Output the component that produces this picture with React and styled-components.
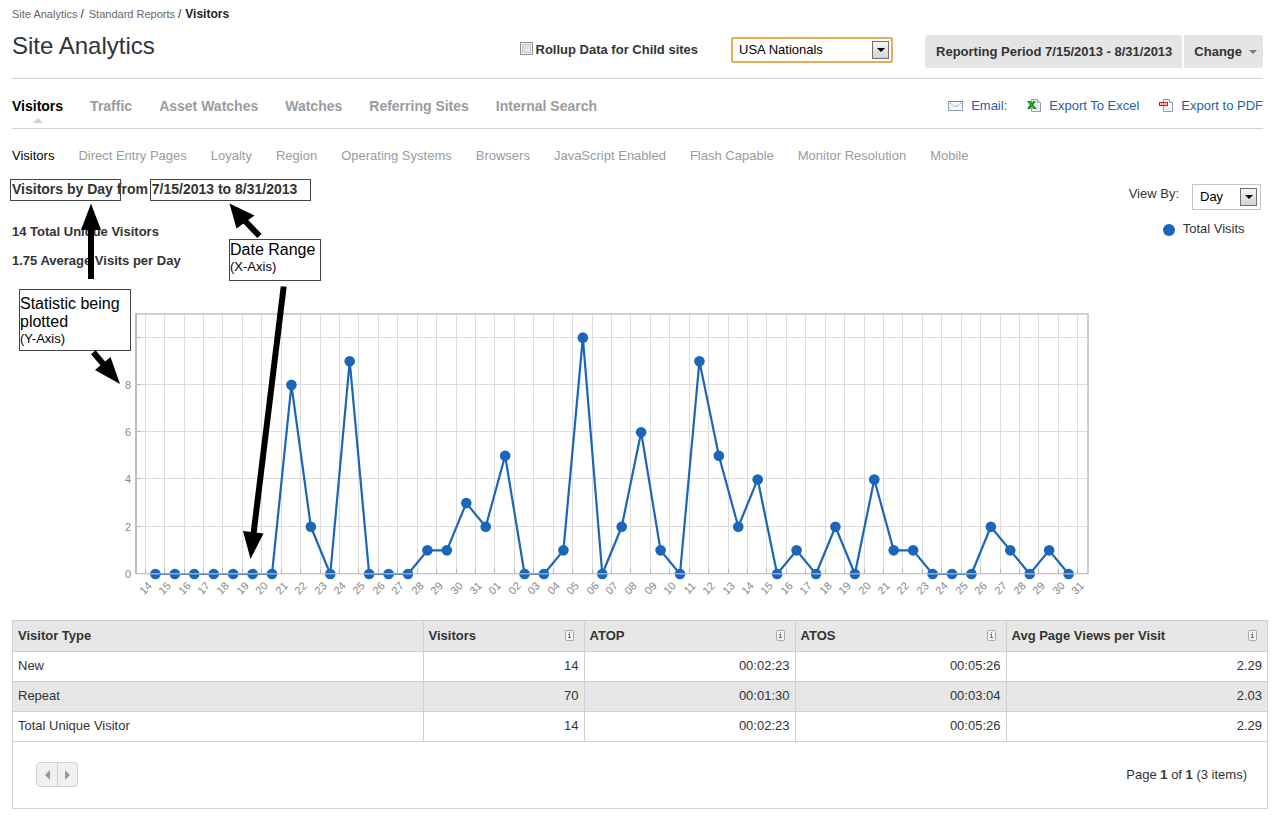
import React from 'react';
import styled, { createGlobalStyle } from 'styled-components';

const GlobalStyle = createGlobalStyle`
  * { box-sizing: border-box; }
  body {
    margin: 0;
    background: #fff;
    color: #333;
    font: 13px/16px "Liberation Sans", Arial, sans-serif;
  }
  button, select, input { font: inherit; color: inherit; margin: 0; }
  h1, h2, p, ul { margin: 0; padding: 0; }
  a { text-decoration: none; color: inherit; }
`;

const Page = styled.div`
  position: relative;
  padding: 6px 11px 11px 12px;
`;

const Breadcrumb = styled.nav`
  display: flex;
  gap: 3px;
  font-size: 12px;
  a { font-size: 11px; color: #666; }
  a + span + a { margin-left: 2px; }
  strong { margin-left: 1px; color: #222; }
`;

const Header = styled.header`
  display: flex;
  justify-content: space-between;
  margin-right: 5px;
  height: 57px;
  border-bottom: 1px solid #d1d1d1;
`;

const Title = styled.h1`
  padding-top: 10px;
  font-size: 24px;
  font-weight: 400;
  line-height: 28px;
  color: #333;
`;

const Controls = styled.div`
  display: flex;
  align-items: flex-start;
  gap: 32px;
  margin-top: 13px;
`;

const Filters = styled.div`
  display: flex;
  align-items: center;
  gap: 33px;
  height: 30px;
`;

const CheckLabel = styled.label`
  display: flex;
  align-items: flex-start;
  gap: 3px;
  font-weight: 700;
`;

const Checkbox = styled.input`
  appearance: none;
  width: 13px;
  height: 13px;
  border: 1px solid #8e8f8f;
  background: linear-gradient(135deg, #cbcfd5, #f6f6f6);
  box-shadow: inset 0 0 0 1px #f4f4f4, inset 0 0 0 2px #c4c8cc;
  &:checked { background: #1a66b8; }
`;

const SelectBox = styled.span`
  position: relative;
  display: block;
  width: ${p => p.$width}px;
`;

const Select = styled.select`
  appearance: none;
  display: block;
  width: 100%;
  height: 26px;
  padding: 0 24px 0 ${p => (p.$focused ? 6 : 7)}px;
  border: ${p => (p.$focused ? '2px solid #e5b055' : '1px solid #c4c4c4')};
  border-radius: ${p => (p.$focused ? 2 : 0)}px;
  background: #fff;
  color: #000;
  outline: 0;
`;

const SelectArrow = styled.span`
  position: absolute;
  top: 4px;
  right: 4px;
  display: flex;
  align-items: center;
  justify-content: center;
  width: 17px;
  height: 18px;
  border: 1px solid #707070;
  background: linear-gradient(#f5f5f5, #d3d3d3);
  pointer-events: none;
`;

const Triangle = styled.i`
  width: 0;
  height: 0;
  border: solid transparent;
  border-width: 4px 4px 0;
  border-top-color: ${p => p.$color};
`;

const Period = styled.div`
  display: flex;
  gap: 2px;
`;

const PeriodButton = styled.button`
  display: flex;
  align-items: center;
  gap: 7px;
  height: 33px;
  padding: 0 ${p => (p.$last ? 6 : 10)}px 0 ${p => (p.$last ? 10 : 11)}px;
  border: 0;
  border-radius: ${p => (p.$last ? '0 3px 3px 0' : '3px 0 0 3px')};
  background: #e5e5e5;
  font-weight: 700;
  white-space: nowrap;
`;

const TabBar = styled.div`
  display: flex;
  justify-content: space-between;
  align-items: center;
  height: 50px;
  margin-right: 5px;
  padding: 6px 0 2px;
  border-bottom: 1px solid #d1d1d1;
`;

const TabList = styled.nav`
  display: flex;
  gap: 27px;
`;

const Tab = styled.a`
  position: relative;
  font-size: 14px;
  font-weight: 700;
  color: ${p => (p.$active ? '#000' : '#999c9f')};
  &::after {
    content: "";
    display: ${p => (p.$active ? 'block' : 'none')};
    position: absolute;
    top: 20px;
    left: calc(50% - 5px);
    border: solid transparent;
    border-width: 0 5px 5px;
    border-bottom-color: #d1d1d1;
  }
`;

const Actions = styled.div`
  display: flex;
  gap: 20px;
`;

const Action = styled.a`
  display: flex;
  align-items: center;
  gap: 8px;
  color: #1f5fae;
`;

const SubNav = styled.nav`
  display: flex;
  flex-wrap: wrap;
  gap: 24px;
  padding: 19px 0 0;
`;

const SubLink = styled.a`
  color: ${p => (p.$active ? '#000' : '#999c9f')};
`;

const Summary = styled.section`
  display: flex;
  justify-content: space-between;
  margin-right: 7px;
  height: 144px;
  padding-top: 16px;
`;

const Heading = styled.h2`
  font-size: 14px;
  line-height: 18px;
`;

const Stat = styled.p`
  margin-top: ${p => (p.$first ? 26 : 13)}px;
  font-weight: 700;
`;

const ViewOptions = styled.div`
  padding-top: 4px;
`;

const ViewBy = styled.div`
  display: flex;
  gap: 13px;
  label { padding-top: 2px; }
`;

const Legend = styled.div`
  display: flex;
  align-items: center;
  gap: 8px;
  padding: 11px 0 0 34px;
`;

const LegendDot = styled.i`
  width: 12px;
  height: 12px;
  margin-top: 2px;
  border-radius: 50%;
  background: #1a66b8;
`;

const ChartArea = styled.section`
  padding: 0 0 12px 108px;
  svg { display: block; width: 100%; max-width: 976px; height: auto; }
`;

const Grid = styled.section`
  border: 1px solid #d1d1d1;
`;

const Table = styled.table`
  width: 100%;
  border-collapse: collapse;
  table-layout: fixed;
`;

const Row = styled.tr`
  height: 30px;
  border-bottom: 1px solid #d1d1d1;
  background: ${p => (p.$shaded ? '#e7e7e7' : '#fff')};
`;

const Cell = styled.td`
  padding: 0 5px;
  border-left: ${p => (p.$first ? 0 : 1)}px solid #d1d1d1;
  text-align: ${p => (p.$first ? 'left' : 'right')};
`;

const HeadCell = styled.th`
  padding: 0 10px 0 5px;
  border-left: ${p => (p.$first ? 0 : 1)}px solid #d1d1d1;
  text-align: left;
`;

const HeadContent = styled.span`
  display: flex;
  align-items: center;
  justify-content: space-between;
`;

const Footer = styled.div`
  display: flex;
  align-items: center;
  justify-content: space-between;
  height: 66px;
  padding: 0 20px 0 23px;
`;

const Pager = styled.div`
  display: flex;
  border: 1px solid #d1d1d1;
  border-radius: 4px;
  background: #f0f0f0;
`;

const PagerButton = styled.button`
  display: flex;
  align-items: center;
  justify-content: center;
  width: 20px;
  height: 23px;
  padding: 0;
  border: 0;
  background: none;
  & + & { border-left: 1px solid #d1d1d1; }
`;

const Note = styled.div`
  position: absolute;
  left: ${p => p.$x}px;
  top: ${p => p.$y}px;
  width: ${p => p.$w}px;
  height: ${p => p.$h}px;
  border: 1px solid #444;
  background: ${p => (p.children ? '#fff' : 'transparent')};
  color: #000;
  font-size: 16px;
  line-height: 18px;
  padding-top: ${p => p.$pad || 0}px;
  small { display: block; font-size: 13px; line-height: 16px; }
`;

const Arrows = styled.svg`
  position: absolute;
  left: 0;
  top: 0;
  pointer-events: none;
`;

const tabs = ['Visitors', 'Traffic', 'Asset Watches', 'Watches', 'Referring Sites', 'Internal Search'];
const subTabs = ['Visitors', 'Direct Entry Pages', 'Loyalty', 'Region', 'Operating Systems', 'Browsers',
  'JavaScript Enabled', 'Flash Capable', 'Monitor Resolution', 'Mobile'];
const visits = [0, 0, 0, 0, 0, 0, 0, 8, 2, 0, 9, 0, 0, 0, 1, 1, 3, 2, 5, 0, 0, 1, 10, 0, 2, 6, 1, 0, 9, 5, 2, 4,
  0, 1, 0, 2, 0, 4, 1, 1, 0, 0, 0, 2, 1, 0, 1, 0];
const days = [
  ...Array.from({ length: 18 }, (_, i) => String(i + 14)),
  ...Array.from({ length: 31 }, (_, i) => String(i + 1).padStart(2, '0')),
];
const columns = ['Visitor Type', 'Visitors', 'ATOP', 'ATOS', 'Avg Page Views per Visit'];
const rows = [
  ['New', '14', '00:02:23', '00:05:26', '2.29'],
  ['Repeat', '70', '00:01:30', '00:03:04', '2.03'],
  ['Total Unique Visitor', '14', '00:02:23', '00:05:26', '2.29'],
];

function MailIcon() {
  return (
    <svg width="15" height="10" viewBox="0 0 15 10" aria-hidden="true">
      <rect x=".5" y=".5" width="14" height="9" fill="#f3f7fc" stroke="#8d9db8" />
      <path d="M0 .5h15" stroke="#6f83a5" />
      <path d="M2 2l4 3.3h3L13 2" fill="none" stroke="#8d9db8" strokeDasharray="2 1" />
    </svg>
  );
}

function FileShape() {
  return (
    <>
      <path d="M4.500 .5h6l3 3v9h-9z" fill="#f5f8fc" stroke="#8d9db8" />
      <path d="M10.500 .5v3h3" fill="#fff" stroke="#8d9db8" />
    </>
  );
}

function ExcelIcon() {
  return (
    <svg width="14" height="13" viewBox="0 0 14 13" aria-hidden="true">
      <FileShape />
      <path d="M8.500 6h3M8.500 8.500h3M8.500 10.500h3" stroke="#c3cfdf" />
      <path d="M0 2h3.500l1.500 2 1.500-2h2.500L6.500 5.500 9.500 10H6L4.500 7.500 3 10H0l2.800-4z" fill="#0b8f1a" />
      <path d="M2 3l5 6" stroke="#8fd68f" strokeWidth=".6" />
    </svg>
  );
}

function PdfIcon() {
  return (
    <svg width="14" height="13" viewBox="0 0 14 13" aria-hidden="true">
      <FileShape />
      <path d="M6.500 9h4M6.500 10.500h4" stroke="#d5dde9" />
      <rect x=".5" y="3.500" width="8" height="3" fill="#ffdcd6" stroke="#d3170f" />
      <path d="M2 5h5" stroke="#e8574f" strokeDasharray="1.500 .5" />
    </svg>
  );
}

function InfoIcon() {
  return (
    <svg width="9" height="11" viewBox="0 0 9 11" aria-hidden="true">
      <rect x=".5" y=".5" width="8" height="10" rx="1" fill="#f4f4f4" stroke="#a9a9a9" />
      <path d="M4 2h1v1H4zM3 4h2v3h1v1H3V7h1V5H3z" fill="#5b7696" />
    </svg>
  );
}

function DropDown({ id, width, focused, options, label }) {
  return (
    <SelectBox $width={width}>
      <Select id={id} $focused={focused} aria-label={label}>
        {options.map(o => <option key={o}>{o}</option>)}
      </Select>
      <SelectArrow><Triangle $color="#000" /></SelectArrow>
    </SelectBox>
  );
}

function VisitsChart() {
  const left = 16;
  const right = 968;
  const top = 6;
  const bottom = 266;
  const step = (right - left) / 49;
  const unit = (bottom - top) / 11;
  const tickX = i => Math.round(left + step * (i + 0.5)) - 0.5;
  const pointX = i => left + step * (i + 1);
  const y = v => bottom - v * unit;
  const lineY = v => Math.round(y(v)) - 0.5;
  return (
    <svg viewBox="0 0 976 300" role="img" aria-label="Total visits by day">
      <g stroke="#dcdcdc">
        {days.map((_, i) => <path key={i} d={`M${tickX(i)} ${top}V${bottom}`} />)}
        {[2, 4, 6, 8, 10].map(v => <path key={v} d={`M${left} ${lineY(v)}H${right}`} />)}
      </g>
      <path d={`M${left} ${top}H${right}V${bottom}`} fill="none" stroke="#d0d0d0" strokeWidth="2" />
      <path d={`M${left} ${top - 1}V${bottom}`} stroke="#bcbcbc" strokeWidth="2" />
      <g stroke="#b5b5b5">
        {days.map((_, i) => <path key={i} d={`M${tickX(i)} ${bottom - 5}v5`} />)}
        {[2, 4, 6, 8, 10].map(v => <path key={v} d={`M${left} ${lineY(v)}h5`} />)}
      </g>
      <polyline
        points={visits.map((v, i) => `${pointX(i)},${y(v)}`).join(' ')}
        fill="none" stroke="#1a66b8" strokeWidth="2.200" strokeLinejoin="round"
      />
      {visits.map((v, i) => <circle key={i} cx={pointX(i)} cy={y(v)} r="5.300" fill="#1a66b8" />)}
      <path d={`M${left} ${bottom - 0.5}H${right}`} stroke="#b3b8bd" strokeOpacity=".8" />
      <path d={`M${left} ${bottom + 0.5}H${right}`} stroke="#ccc" strokeOpacity=".4" />
      <g fill="#888" fontSize="11" textAnchor="middle" dominantBaseline="central">
        {[0, 2, 4, 6, 8].map(v => <text key={v} x="8" y={y(v)}>{v}</text>)}
        {days.map((d, i) => (
          <text key={i} transform={`translate(${tickX(i)} 280) rotate(-45)`}>{d}</text>
        ))}
      </g>
    </svg>
  );
}

function Annotations() {
  return (
    <>
      <Note $x={10} $y={179} $w={111} $h={22} />
      <Note $x={150} $y={179} $w={161} $h={22} />
      <Note $x={229} $y={239} $w={92} $h={42} $pad={1}>Date Range<small>(X-Axis)</small></Note>
      <Note $x={19} $y={289} $w={112} $h={62} $pad={5}>Statistic being plotted<small>(Y-Axis)</small></Note>
      <Arrows width="330" height="600" viewBox="0 0 330 600" aria-hidden="true">
        <g stroke="#000" strokeWidth="6">
          <path d="M91 279V228" />
          <path d="M259.500 236L244 220" />
          <path d="M93.300 352.300L105 366" />
          <path d="M283.700 286.500L253.500 534" />
        </g>
        <path d="M91 203.500l10 26.500H81z" />
        <path d="M229.500 203.500l25 12-18 13z" />
        <path d="M120 384l-25-14 15.500-13z" />
        <path d="M250.500 559l-7.500-28 20.500 2.500z" />
      </Arrows>
    </>
  );
}

export default function App() {
  return (
    <Page>
      <GlobalStyle />
      <Breadcrumb aria-label="Breadcrumb">
        <a href="#analytics">Site Analytics</a><span>/</span>
        <a href="#reports">Standard Reports</a><span>/</span>
        <strong>Visitors</strong>
      </Breadcrumb>
      <Header>
        <Title>Site Analytics</Title>
        <Controls>
          <Filters>
            <CheckLabel htmlFor="rollup">
              <Checkbox id="rollup" type="checkbox" />
              Rollup Data for Child sites
            </CheckLabel>
            <DropDown id="site" label="Site" width={162} focused options={['USA Nationals']} />
          </Filters>
          <Period>
            <PeriodButton type="button">Reporting Period 7/15/2013 - 8/31/2013</PeriodButton>
            <PeriodButton type="button" $last>Change <Triangle $color="#777" /></PeriodButton>
          </Period>
        </Controls>
      </Header>
      <TabBar>
        <TabList>
          {tabs.map((t, i) => <Tab key={t} href="#tab" $active={i === 0}>{t}</Tab>)}
        </TabList>
        <Actions>
          <Action href="#email"><MailIcon />Email:</Action>
          <Action href="#excel"><ExcelIcon />Export To Excel</Action>
          <Action href="#pdf"><PdfIcon />Export to PDF</Action>
        </Actions>
      </TabBar>
      <SubNav>
        {subTabs.map((t, i) => <SubLink key={t} href="#report" $active={i === 0}>{t}</SubLink>)}
      </SubNav>
      <Summary>
        <div>
          <Heading>Visitors by Day from 7/15/2013 to 8/31/2013</Heading>
          <Stat $first>14 Total Unique Visitors</Stat>
          <Stat>1.75 Average Visits per Day</Stat>
        </div>
        <ViewOptions>
          <ViewBy>
            <label htmlFor="view-by">View By:</label>
            <DropDown id="view-by" width={69} options={['Day']} />
          </ViewBy>
          <Legend><LegendDot />Total Visits</Legend>
        </ViewOptions>
      </Summary>
      <ChartArea><VisitsChart /></ChartArea>
      <Grid>
        <Table>
          <colgroup>
            <col />
            <col width="161" />
            <col width="211" />
            <col width="211" />
            <col width="261" />
          </colgroup>
          <thead>
            <Row $shaded>
              {columns.map((c, i) => (
                <HeadCell key={c} $first={i === 0} scope="col">
                  <HeadContent>{c}{i > 0 && <InfoIcon />}</HeadContent>
                </HeadCell>
              ))}
            </Row>
          </thead>
          <tbody>
            {rows.map((r, n) => (
              <Row key={r[0]} $shaded={n === 1}>
                {r.map((c, i) => <Cell key={i} $first={i === 0}>{c}</Cell>)}
              </Row>
            ))}
          </tbody>
        </Table>
        <Footer>
          <Pager>
            <PagerButton type="button" aria-label="Previous page">
              <svg width="5" height="10" viewBox="0 0 5 10"><path d="M5 0v10L0 5z" fill="#999" /></svg>
            </PagerButton>
            <PagerButton type="button" aria-label="Next page">
              <svg width="5" height="10" viewBox="0 0 5 10"><path d="M0 0v10l5-5z" fill="#999" /></svg>
            </PagerButton>
          </Pager>
          <span>Page <b>1</b> of <b>1</b> (3 items)</span>
        </Footer>
      </Grid>
      <Annotations />
    </Page>
  );
}
